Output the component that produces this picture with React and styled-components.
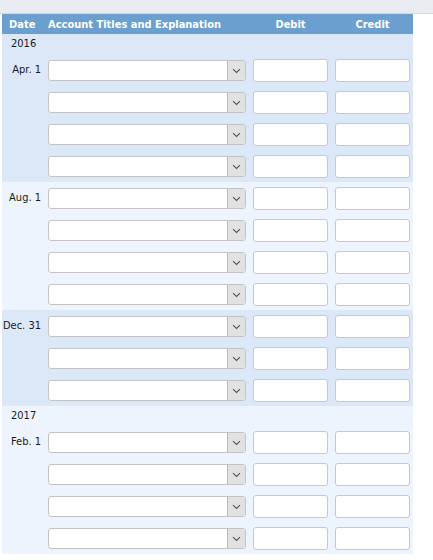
import React from 'react';
import styled, { createGlobalStyle } from 'styled-components';

const GlobalStyle = createGlobalStyle`
    body {
        margin: 0;
        background: #ffffff;
        font-family: Tahoma, "DejaVu Sans Condensed", "DejaVu Sans", sans-serif;
        font-size: 11px;
        color: #1a1a1a;
    }
`;

const TopBar = styled.div`
    height: 13px;
    background: #e8ecf0;
    border-bottom: 1px solid #d3d7db;
`;

const Table = styled.div`
    width: 411px;
    margin-left: 2px;
`;

const Row = styled.div`
    display: grid;
    grid-template-columns: 39px 198px 75px 75px;
    column-gap: 7px;
    padding-right: 3px;
`;

const HeaderRow = styled(Row)`
    height: 20px;
    align-items: center;
    background: #6a9fcf;
    color: #ffffff;
    font-weight: bold;
`;

const HeadCell = styled.div`
    text-align: ${p => p.align || 'left'};
    padding-left: ${p => p.pad || 0}px;
    white-space: nowrap;
`;

const Section = styled.div`
    background: ${p => p.dark ? '#dce8f8' : '#edf4fd'};
`;

const YearRow = styled.div`
    height: 20px;
    line-height: 19px;
    padding-left: 9px;
`;

const EntryRow = styled(Row)`
    height: 32px;
    padding-top: 5px;
    box-sizing: border-box;
    align-items: start;
`;

const DateCell = styled.div`
    text-align: right;
    line-height: 22px;
    white-space: nowrap;
`;

const Select = styled.div`
    margin-top: 1px;
    height: 21px;
    box-sizing: border-box;
    background: #ffffff;
    border: 1px solid #c4c4c4;
    border-radius: 3px;
    display: flex;
    justify-content: flex-end;
    overflow: hidden;
`;

const Arrow = styled.div`
    width: 17px;
    height: 100%;
    background: #e1e1e1;
    border-left: 1px solid #b8b8b8;
    display: flex;
    align-items: center;
    justify-content: center;
`;

const Input = styled.div`
    height: 23px;
    box-sizing: border-box;
    background: #ffffff;
    border: 1px solid #c8c8c8;
    border-radius: 3px;
`;

const Chevron = () => (
    <svg width="9" height="6" viewBox="0 0 9 6">
        <path d="M1 1.2 L4.5 4.5 L8 1.2" fill="none" stroke="#555" strokeWidth="1.1" />
    </svg>
);

const Entry = ( { date } ) => (
    <EntryRow>
        <DateCell>{ date }</DateCell>
        <Select><Arrow><Chevron /></Arrow></Select>
        <Input />
        <Input />
    </EntryRow>
);

const sections = [
    { year: '2016', dark: true, rows: [ 'Apr. 1', '', '', '' ] },
    { dark: false, rows: [ 'Aug. 1', '', '', '' ] },
    { dark: true, rows: [ 'Dec. 31', '', '' ] },
    { year: '2017', dark: false, rows: [ 'Feb. 1', '', '', '' ] },
];

export default function App() {
    return (
        <>
            <GlobalStyle />
            <TopBar />
            <Table>
                <HeaderRow>
                    <HeadCell pad={7}>Date</HeadCell>
                    <HeadCell>Account Titles and Explanation</HeadCell>
                    <HeadCell align="center">Debit</HeadCell>
                    <HeadCell align="center">Credit</HeadCell>
                </HeaderRow>
                { sections.map( ( s, i ) => (
                    <Section key={ 'sec-' + i } dark={ s.dark }>
                        { s.year && <YearRow>{ s.year }</YearRow> }
                        { s.rows.map( ( d, j ) => <Entry key={ 'row-' + j } date={ d } /> ) }
                    </Section>
                ) ) }
            </Table>
        </>
    );
}
